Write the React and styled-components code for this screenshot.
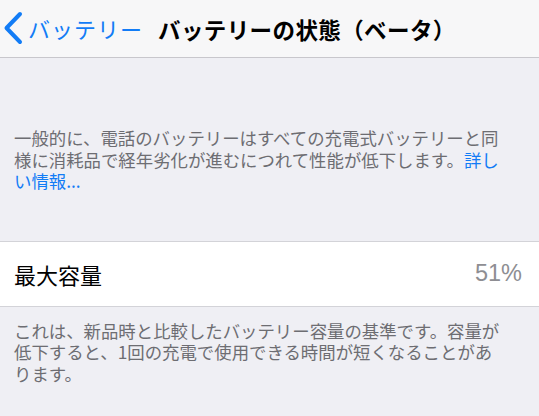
import React from "react";
import styled, { createGlobalStyle } from "styled-components";

const GlobalStyle = createGlobalStyle`
  html, body {
    margin: 0;
    padding: 0;
    background: #efeff4;
  }
  body {
    font-family: "Noto Sans CJK JP", "Noto Sans", sans-serif;
    -webkit-font-smoothing: antialiased;
    text-spacing-trim: space-all;
  }
`;

const Page = styled.div`
  width: 539px;
  height: 416px;
  overflow: hidden;
  background: #efeff4;
`;

const NavBar = styled.header`
  height: 58px;
  display: flex;
  align-items: center;
  background: #f7f7f8;
  border-bottom: 1px solid #c8c7cc;
  box-sizing: border-box;
`;

const BackButton = styled.button`
  display: flex;
  align-items: center;
  gap: 5px;
  padding: 0 0 2px 3px;
  border: 0;
  background: none;
  color: #127cf6;
  font: inherit;
  font-size: 22px;
  letter-spacing: 1px;
  cursor: pointer;
  svg {
    display: block;
  }
`;

const Title = styled.h1`
  margin: 0 0 0 15px;
  font-size: 22.5px;
  letter-spacing: 0.4px;
  font-weight: 700;
  color: #000;
  white-space: nowrap;
`;

const Note = styled.p`
  margin: 0;
  padding: ${(p) => p.$pad};
  font-size: 17.4px;
  line-height: 21.5px;
  color: #6d6d72;
  line-break: strict;
`;

const Link = styled.a`
  color: #127cf6;
  text-decoration: none;
`;

const Cell = styled.div`
  height: 66px;
  display: flex;
  align-items: center;
  justify-content: space-between;
  padding: 0 17px 0 14px;
  background: #fff;
  border-top: 1px solid #d3d3d8;
  border-bottom: 1px solid #d3d3d8;
  box-sizing: border-box;
`;

const Label = styled.span`
  font-size: 22px;
  color: #000;
`;

const Value = styled.span`
  font-family: "Liberation Sans", Arial, sans-serif;
  font-size: 23.5px;
  color: #8e8e93;
`;

function Chevron() {
  return (
    <svg width="20" height="34" viewBox="0 0 20 34">
      <path
        d="M17 3 L3.5 17 L17 31"
        fill="none"
        stroke="#127cf6"
        strokeWidth="4"
        strokeLinecap="round"
        strokeLinejoin="round"
      />
    </svg>
  );
}

export default function App() {
  return (
    <Page>
      <GlobalStyle />
      <NavBar>
        <BackButton>
          <Chevron />
          バッテリー
        </BackButton>
        <Title>バッテリーの状態（ベータ）</Title>
      </NavBar>
      <Note $pad="69px 33px 49px 14px">
        一般的に、電話のバッテリーはすべての充電式バッテリーと同様に消耗品で経年劣化が進むにつれて性能が低下します。
        <Link href="#">詳しい情報...</Link>
      </Note>
      <Cell>
        <Label>最大容量</Label>
        <Value>51%</Value>
      </Cell>
      <Note $pad="13px 33px 0 14px">
        これは、新品時と比較したバッテリー容量の基準です。容量が低下すると、1回の充電で使用できる時間が短くなることがあります。
      </Note>
    </Page>
  );
}
